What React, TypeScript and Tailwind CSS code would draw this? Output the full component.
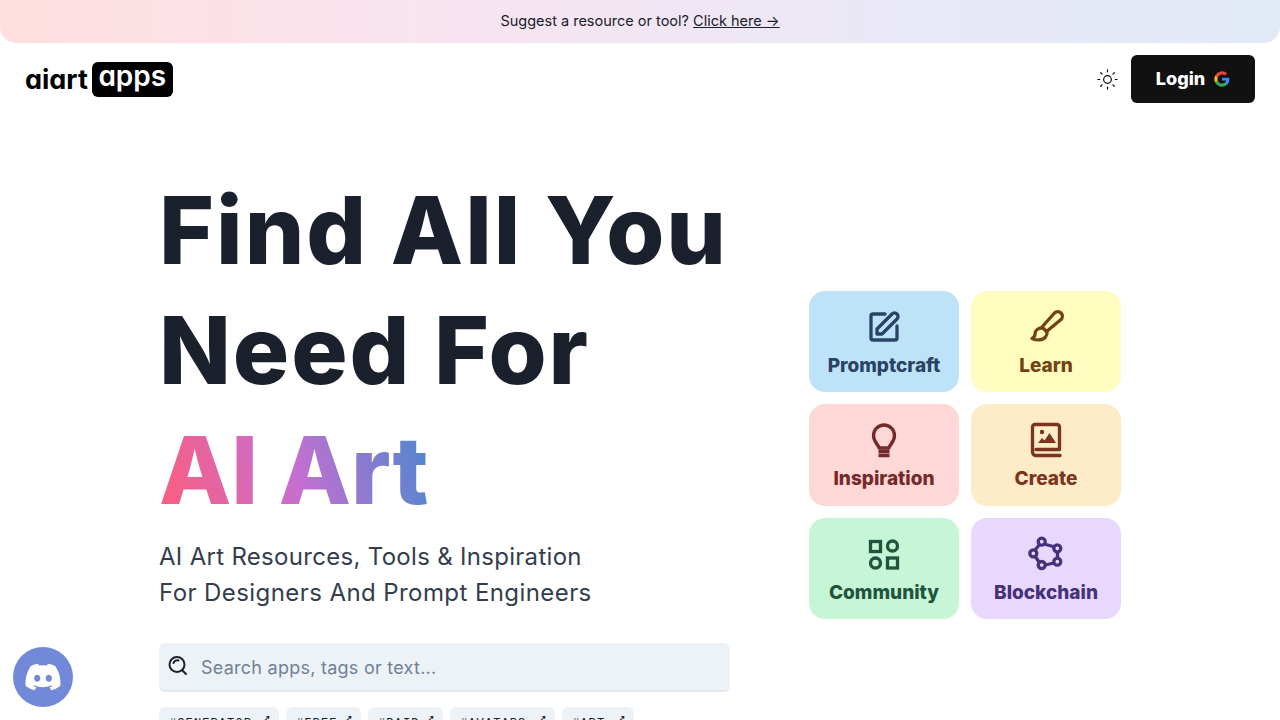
import { Sun } from "lucide-react";
import { FaDiscord } from "react-icons/fa";

const font = "[font-family:Inter,'Liberation_Sans',sans-serif]";

/* ── icons ── */
const PromptIcon = () => (
  <svg viewBox="0 0 36 36" className="w-9 h-9" fill="none" stroke="currentColor" strokeWidth="3.3" strokeLinejoin="round" strokeLinecap="round">
    <path d="M19 5H7a2 2 0 0 0-2 2v22a2 2 0 0 0 2 2h22a2 2 0 0 0 2-2V17" />
    <path d="M11 25v-5L26 5a3 3 0 0 1 5 5L16 25z" />
  </svg>
);

const BrushIcon = () => (
  <svg viewBox="0 0 36 36" className="w-9 h-9" fill="none" stroke="currentColor" strokeWidth="3.3" strokeLinejoin="round" strokeLinecap="round">
    <path d="M26.500 4L14 18l4.500 4.500L33 10.500a3.800 3.800 0 0 0-6.500-6.500z" />
    <path d="M14 19c-4 0-7 2.500-7 6 0 2-1 3.500-3 4.500 3 2 11 2 13.500-1.500 1.500-2 2-4 1.500-6" />
  </svg>
);

const BulbIcon = () => (
  <svg viewBox="0 0 36 36" className="w-9 h-9" fill="none" stroke="currentColor" strokeWidth="3.3" strokeLinejoin="round">
    <path d="M13 26c0-3-5.500-5.500-5.500-12.500a10.500 10.500 0 0 1 21 0c0 7-5.500 9.500-5.500 12.500z" />
    <path d="M12.500 29.500h11M12.500 33.500h11" />
  </svg>
);

const BookIcon = () => (
  <svg viewBox="0 0 36 36" className="w-9 h-9" fill="none" stroke="currentColor" strokeWidth="3.3" strokeLinejoin="round" strokeLinecap="round">
    <path d="M32 33.500H8A3.500 3.500 0 0 1 4.500 30V5A2.500 2.500 0 0 1 7 2.500h22A2.500 2.500 0 0 1 31.500 5v22.500H8" />
    <circle cx="14" cy="10" r="2.200" fill="currentColor" stroke="none" />
    <path d="M10 21l4-5 2.500 2.500 5-7.500 6.500 10z" fill="currentColor" stroke="none" />
  </svg>
);

const ShapesIcon = () => (
  <svg viewBox="0 0 36 36" className="w-9 h-9" fill="none" stroke="currentColor" strokeWidth="3.3">
    <rect x="4.500" y="5.500" width="10" height="10" />
    <circle cx="26.500" cy="10" r="5" />
    <circle cx="9.500" cy="27" r="5" />
    <rect x="21.500" y="22" width="10" height="10" />
  </svg>
);

const ChainIcon = () => (
  <svg viewBox="0 0 36 36" className="w-9 h-9" fill="none" stroke="currentColor" strokeWidth="3.3">
    <path d="M16 8l11 3M29.500 15v8M26 27l-9 2M11 26l-4-6M7 14l5-6" />
    <circle cx="13.700" cy="5.700" r="3.500" />
    <circle cx="29.300" cy="12.300" r="3.500" />
    <circle cx="29.300" cy="25.700" r="3.500" />
    <circle cx="13.700" cy="29" r="3.500" />
    <circle cx="5.300" cy="17.300" r="3.500" />
  </svg>
);

const GoogleIcon = () => (
  <svg viewBox="0 0 24 24" className="w-4 h-4">
    <path fill="#4285F4" d="M23 12.300c0-.8-.1-1.600-.2-2.300H12v4.400h6.200a5.300 5.300 0 0 1-2.300 3.500v2.900h3.700c2.200-2 3.400-5 3.400-8.500z" />
    <path fill="#34A853" d="M12 23.500c3.100 0 5.700-1 7.600-2.800l-3.700-2.900c-1 .7-2.300 1.100-3.900 1.100-3 0-5.500-2-6.400-4.700H1.800v3c1.900 3.800 5.800 6.300 10.200 6.300z" />
    <path fill="#FBBC05" d="M5.600 14.200a6.900 6.900 0 0 1 0-4.400v-3H1.800a11.500 11.500 0 0 0 0 10.400z" />
    <path fill="#EA4335" d="M12 5.100c1.700 0 3.200.6 4.400 1.700l3.300-3.300A11.500 11.500 0 0 0 1.800 6.800l3.800 3C6.500 7.100 9 5.100 12 5.100z" />
  </svg>
);

const SearchIcon = () => (
  <svg viewBox="0 0 24 24" className="w-6 h-6 -mt-[3px] -ml-px text-[#1a202c]" fill="none" stroke="currentColor" strokeWidth="2" strokeLinecap="round">
    <circle cx="12" cy="11.500" r="7.500" />
    <path d="M8.500 10a4 4 0 0 1 5-2.500M17.500 17.500l3.500 3.500" />
  </svg>
);

const cards = [
  { label: "Promptcraft", icon: <PromptIcon />, box: "bg-[#bee3f8] text-[#2a4365]" },
  { label: "Learn", icon: <BrushIcon />, box: "bg-[#fefcbf] text-[#744210]" },
  { label: "Inspiration", icon: <BulbIcon />, box: "bg-[#fed7d7] text-[#742a2a]" },
  { label: "Create", icon: <BookIcon />, box: "bg-[#feebc8] text-[#7b341e]" },
  { label: "Community", icon: <ShapesIcon />, box: "bg-[#c6f6d5] text-[#22543d]" },
  { label: "Blockchain", icon: <ChainIcon />, box: "bg-[#e9d8fd] text-[#44337a]" },
];

const tags = [
  { label: "#GENERATOR", width: "w-[120px]" },
  { label: "#FREE", width: "w-[75px]" },
  { label: "#PAID", width: "w-[75px]" },
  { label: "#AVATARS", width: "w-[105px]" },
  { label: "#ART", width: "w-[72px]" },
];

export default function App() {
  return (
    <div className={`${font} relative h-screen overflow-hidden bg-white text-[#1a202c]`}>
      {/* Banner */}
      <div className="h-[43px] pb-[2px] rounded-b-2xl bg-[linear-gradient(to_right,#ffdfdf,#f8e4f0_35%,#e9e8f6_70%,#e1e9f6)] flex items-center justify-center text-[14.5px] text-[#1a202c]">
        Suggest a resource or tool?&nbsp;
        <a className="underline">Click here →</a>
      </div>

      {/* Header */}
      <header className="flex items-center justify-between pl-[25px] pr-[25px] pt-3">
        <div className="flex items-center gap-[4px]">
          <span className="text-[27px] font-bold leading-none text-black [font-feature-settings:'cv11']">aiart</span>
          <span className="w-[81px] h-[35px] rounded-md bg-black text-white text-[28px] font-semibold leading-[29px] text-center [font-feature-settings:'cv11']">apps</span>
        </div>
        <div className="flex items-center gap-[12px]">
          <Sun size={23} strokeWidth={1.2} className="text-black" />
          <button className="w-[124px] h-12 rounded-md bg-[#111] text-white text-lg font-extrabold flex items-center justify-center gap-[9px]">
            Login <GoogleIcon />
          </button>
        </div>
      </header>

      {/* Hero */}
      <main className="flex items-start pl-[159px] pt-[67px]">
        <section className="w-[571px] shrink-0">
          <h1 className="text-[94px] leading-[120px] font-extrabold text-[#1a202c]">
            <div className="tracking-[2px]">Find All You</div>
            <div className="tracking-[1.9px]">Need For</div>
            <div>
              <span className="bg-[linear-gradient(75deg,#ff5c7a,#c56fd0_50%,#4a88d0)] bg-clip-text text-transparent">AI Art</span>
            </div>
          </h1>
          <p className="mt-[9px] text-2xl leading-9 text-[#333d4d]">
            <span className="block tracking-[0.3px]">AI Art Resources, Tools &amp; Inspiration</span>
            <span className="block tracking-[0.42px]">For Designers And Prompt Engineers</span>
          </p>
          <div className="mt-[32px] h-[49px] rounded-md bg-[#edf2f7] border-b-2 border-[#e2e8f0] flex items-center pl-[7px] gap-[12px]">
            <SearchIcon />
            <span className="pt-[2px] text-lg tracking-[0.25px] text-[#718096]">Search apps, tags or text...</span>
          </div>
          <div className="mt-[15px] flex gap-[7px]">
            {tags.map((t) => (
              <span key={t.label} className={`${t.width} h-9 rounded-md bg-[#edf2f7] pl-[10px] pr-[8px] pt-[9px] flex justify-between font-['Liberation_Mono',monospace] text-xs tracking-[1.1px] text-[#1a202c]`}>
                {t.label}
                <span className="-mt-[4px]">➚</span>
              </span>
            ))}
          </div>
        </section>

        {/* Category cards */}
        <section className="ml-[79px] mt-[121px] grid grid-cols-[150px_150px] auto-rows-[101.33px] gap-3">
          {cards.map((c) => (
            <div key={c.label} className={`${c.box} rounded-2xl flex flex-col items-center pt-[18px]`}>
              {c.icon}
              <span className="mt-[7px] text-[19px] leading-7 font-extrabold">{c.label}</span>
            </div>
          ))}
        </section>
      </main>

      {/* Discord */}
      <button className="absolute left-[13px] bottom-[13px] w-[60px] h-[60px] rounded-full bg-[#7289da] text-white flex items-center justify-center">
        <FaDiscord size={38} />
      </button>
    </div>
  );
}
